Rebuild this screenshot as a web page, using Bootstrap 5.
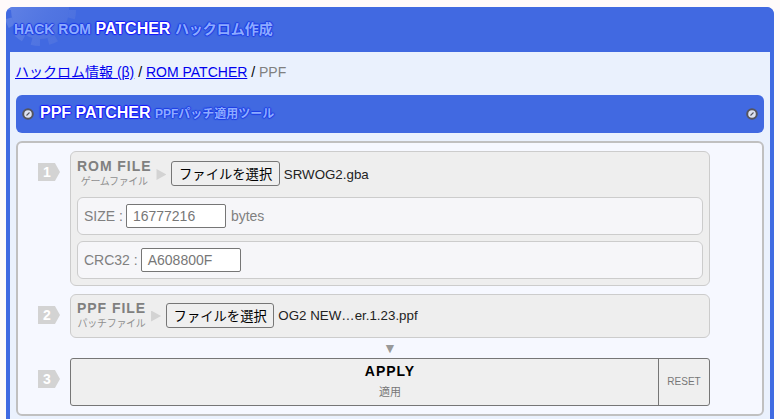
<!DOCTYPE html>
<html lang="ja">
<head>
<meta charset="utf-8">
<title>PPF PATCHER</title>
<link rel="stylesheet" href="https://cdn.jsdelivr.net/npm/bootstrap@5.3.0/dist/css/bootstrap.min.css">
<style>
html,body{height:419px;overflow:hidden}
body{background:#fffafa;font-family:"Liberation Sans","Noto Sans CJK JP",sans-serif;font-size:14px;color:#000;padding:7px 6px 0}
.shell{border:4px solid #4169e1;border-bottom:0;border-radius:8px 8px 0 0;background:#eaf1fd;height:420px}
.topbar{background:#4169e1;margin:-4px -4px 0;padding:0 8px;border-radius:7px 7px 0 0;position:relative;overflow:hidden;height:45px}
.gear{position:absolute;left:-6px;top:-37px;width:80px;height:80px}
.toptext{position:relative;line-height:44px;font-weight:700;white-space:nowrap;font-size:16px}
.dim{color:#8dabff;text-shadow:1px 0 1px #1c3ce6,-1px 0 1px #1c3ce6,0 1px 1px #1c3ce6,0 -1px 1px #1c3ce6}
.bright{color:#fff;text-shadow:1px 0 1px #1414ff,-1px 0 1px #1414ff,0 1px 1px #1414ff,0 -1px 1px #1414ff}
.sz14{font-size:14px}
.crumbs{font-size:14px;padding:12px 6px 0 5px;height:43px;line-height:17px}
.crumbs a{color:#00e}
.crumbs .tail{color:#808080}
.subbar{background:#4169e1;height:38px;border-radius:6px;margin:0 6px;padding:0 6px;font-weight:700}
.subttl{font-size:16px;line-height:33px;margin-bottom:2px;margin-left:6px;flex:1;white-space:nowrap}
.subttl small{font-size:12px;font-weight:700}
.nut{width:12px;height:12px;flex:none}
.panel{background:#f6f8ff;border:2px solid #c0c0c0;border-radius:6px;margin:8px 6px 0;padding:8px 52px 0 20px;height:275px}
.stepmark{width:22px;height:18px;margin-top:12px;background:#d3d3d3;clip-path:polygon(0 0,77% 0,100% 50%,77% 100%,0 100%);color:#fff;font-weight:700;font-size:14px;line-height:18px;padding-left:5px;flex:none;margin-right:10px}
.slot{background:#eee;border:1px solid #ccc;border-radius:6px;flex:1;min-width:0}
.slothead{height:45px;padding-left:6px}
.slothead2{height:42px}
.slotname{color:#808080;font-weight:700;font-size:14px;letter-spacing:.95px;line-height:15px;white-space:nowrap;margin-top:-1px}
.slotsub{color:#909090;font-size:10px;line-height:15px;white-space:nowrap;font-weight:400;letter-spacing:-.3px;display:block;text-align:center}
.tick{width:10px;height:11px;background:#d3d3d3;clip-path:polygon(0 0,100% 50%,0 100%);margin:0 5px;flex:none}
.pick{background:#efefef;border:1px solid #767676;border-radius:3px;font-size:13.33px;line-height:19px;height:25px;padding:1px 6.5px;margin-bottom:2px;color:#000;white-space:nowrap;font-family:"Noto Sans CJK JP","Liberation Sans",sans-serif}
.fname{font-size:13.33px;margin-left:4px;white-space:nowrap;color:#222}
.info{background:#f6f6f9;border:1px solid #ccc;border-radius:6px;height:38px;margin:0 6px 6px;padding:0 6px;color:#808080;font-size:14px}
.val{width:100px;height:24px;background:#fff;border:1px solid #767676;border-radius:2px;padding:0 6px;font-size:14px;color:#777;line-height:22px;margin:0 5px 0 3px}
.nextrow{margin-top:8px}
.down{color:#999;font-size:14px;line-height:20px;text-align:center;height:20px;margin-left:32px}
.applyrow{height:48px}
.applybox{flex:1;border:1px solid #767676;border-radius:3px;background:#efefef;overflow:hidden;min-width:0}
.applymain{flex:1;text-align:center;font-weight:700;letter-spacing:1px;font-size:14px;line-height:17px;padding:4px 0 0 51px}
.applymain span{display:block;font-size:11px;font-weight:400;color:#777;letter-spacing:0;margin-top:4px}
.resetbtn{width:51px;border-left:1px solid #767676;color:#777;font-size:10px;text-align:center;line-height:46px}
</style>
</head>
<body>
<div class="shell">
  <div class="topbar">
    <svg class="gear" viewBox="0 0 80 80" aria-hidden="true">
      <defs><linearGradient id="gearfade" gradientUnits="userSpaceOnUse" x1="0" y1="20" x2="76" y2="70"><stop offset="0" stop-color="#fff" stop-opacity=".2"/><stop offset=".6" stop-color="#c8d0e8" stop-opacity=".12"/><stop offset="1" stop-color="#a0a8c8" stop-opacity=".1"/></linearGradient></defs>
      <circle cx="40" cy="40" r="32.5" fill="none" stroke="url(#gearfade)" stroke-width="7" stroke-dasharray="8.5 8.5"/>
      <circle cx="40" cy="40" r="29" fill="url(#gearfade)"/>
    </svg>
    <div class="toptext"><span class="dim sz14">HACK ROM</span> <span class="bright">PATCHER</span> <span class="dim sz14">ハックロム作成</span></div>
  </div>
  <div class="crumbs"><a href="#">ハックロム情報 (β)</a> / <a href="#">ROM PATCHER</a> / <span class="tail">PPF</span></div>
  <div class="subbar d-flex align-items-center">
    <svg class="nut" viewBox="0 0 12 12"><circle cx="6" cy="6" r="5.8" fill="#55555f"/><circle cx="6" cy="6" r="3.8" fill="#dde2f2"/><path d="M4.5 7.5 7.5 4.5" stroke="#55555f" stroke-width="1.1"/></svg>
    <div class="subttl"><span class="bright">PPF PATCHER</span> <small class="dim">PPFパッチ適用ツール</small></div>
    <svg class="nut" viewBox="0 0 12 12"><circle cx="6" cy="6" r="5.8" fill="#55555f"/><circle cx="6" cy="6" r="3.8" fill="#dde2f2"/><path d="M4.5 7.5 7.5 4.5" stroke="#55555f" stroke-width="1.1"/></svg>
  </div>
  <div class="panel">
    <div class="d-flex">
      <div class="stepmark">1</div>
      <div class="slot">
        <div class="slothead d-flex align-items-center">
          <div><div class="slotname">ROM FILE<span class="slotsub">ゲームファイル</span></div></div>
          <div class="tick"></div>
          <button class="pick" type="button">ファイルを選択</button>
          <span class="fname">SRWOG2.gba</span>
        </div>
        <div class="info d-flex align-items-center">SIZE :<span class="val">16777216</span>bytes</div>
        <div class="info d-flex align-items-center">CRC32 :<span class="val">A608800F</span></div>
      </div>
    </div>
    <div class="d-flex nextrow">
      <div class="stepmark">2</div>
      <div class="slot">
        <div class="slothead slothead2 d-flex align-items-center">
          <div><div class="slotname">PPF FILE<span class="slotsub">パッチファイル</span></div></div>
          <div class="tick"></div>
          <button class="pick" type="button">ファイルを選択</button>
          <span class="fname">OG2 NEW…er.1.23.ppf</span>
        </div>
      </div>
    </div>
    <div class="down">▼</div>
    <div class="applyrow d-flex">
      <div class="stepmark">3</div>
      <div class="applybox d-flex align-self-stretch">
        <div class="applymain">APPLY<span>適用</span></div>
        <div class="resetbtn">RESET</div>
      </div>
    </div>
  </div>
</div>
<script src="https://cdn.jsdelivr.net/npm/bootstrap@5.3.0/dist/js/bootstrap.bundle.min.js"></script>
</body>
</html>
